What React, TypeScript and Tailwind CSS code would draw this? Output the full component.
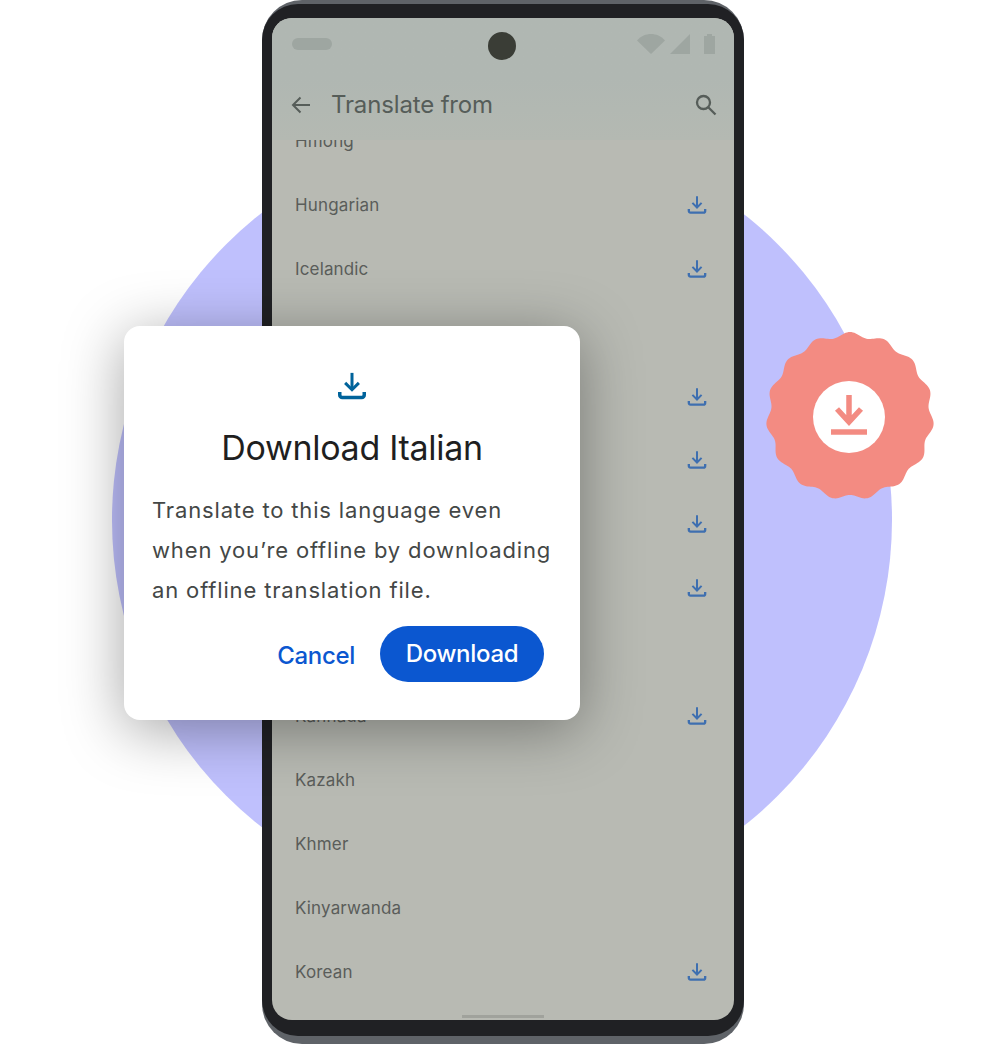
const F = "font-['Inter','Liberation_Sans',sans-serif]";

function Dl({ className }: { className: string }) {
  return (
    <svg viewBox="0 0 24 24" fill="none" stroke="currentColor" strokeWidth="2.4" className={className}>
      <path d="M12 1.5V15" />
      <path d="M6.500 9.500 12 15l5.500-5.500" />
      <path d="M2.200 16.800v2.400a2 2 0 0 0 2 2h15.600a2 2 0 0 0 2-2v-2.400" strokeWidth="2.800" />
    </svg>
  );
}

const rows: [string, boolean][] = [
  ["Hmong", false],
  ["Hungarian", true],
  ["Icelandic", true],
  ["Igbo", false],
  ["Indonesian", true],
  ["Irish", true],
  ["Italian", true],
  ["Japanese", true],
  ["Javanese", false],
  ["Kannada", true],
  ["Kazakh", false],
  ["Khmer", false],
  ["Kinyarwanda", false],
  ["Korean", true],
];

function scallop() {
  const n = 15, cx = 85, cy = 85, pts: string[] = [];
  for (let i = 0; i <= 360; i += 1) {
    const t = (i * Math.PI) / 180;
    const r = 81.500 + 2.500 * Math.cos(n * t + (3 * Math.PI) / 2);
    pts.push(`${(cx + r * Math.cos(t)).toFixed(2)},${(cy + r * Math.sin(t)).toFixed(2)}`);
  }
  return pts.join(" ");
}

export default function App() {
  return (
    <div className={`relative w-[1006px] h-[1044px] bg-white overflow-hidden ${F}`}>
      <div className="absolute left-[112px] top-[130px] w-[780px] h-[780px] rounded-full bg-[#bfc0fd]" />

      <div className="relative ml-[262px] w-[482px] h-[1044px] rounded-[40px] bg-[#5f6368] pt-[4px] pb-[8px]">
        <div className="h-full rounded-[36px] bg-[#202124] px-[10px] pt-[14px] pb-[16px]">
          <div className="relative h-full rounded-[20px] overflow-hidden bg-[#b8bab3] flex flex-col">
            <div className="h-[122px] shrink-0 relative z-10 bg-gradient-to-b from-[#b0b7b2] via-[#b0b7b2] to-[#b4b9b2] flex flex-col">
              <div className="relative h-[56px] pl-[20px] pr-[19px] flex items-start justify-between">
                <div className="mt-[20px] w-[40px] h-[12px] rounded-full bg-[#9ea6a1]" />
                <div className="absolute left-[216px] top-[14px] w-[28px] h-[28px] rounded-full bg-[#3a3d36]" />
                <div className="mt-[16px] flex items-start gap-[5px]">
                  <svg viewBox="0 0 28 20" className="w-[28px] h-[20px]"><path d="M0 6.500C4 2 9 0 14 0s10 2 14 6.500L14 20z" fill="#9ea6a1" /></svg>
                  <svg viewBox="0 0 20 20" className="w-[20px] h-[20px]"><path d="M20 0v20H0z" fill="#9ea6a1" /></svg>
                  <svg viewBox="0 0 11 20" className="ml-[9px] w-[11px] h-[20px]"><path d="M0 2h3V0h5v2h3v18H0z" fill="#9ea6a1" /></svg>
                </div>
              </div>
              <div className="h-[60px] pt-[2px] pl-[17px] pr-[16px] flex items-center text-[#565d59]">
                <svg viewBox="0 0 24 24" fill="none" stroke="currentColor" strokeWidth="2" className="w-[24px] h-[24px]">
                  <path d="M21 12H4M11.500 4.500 4 12l7.500 7.500" />
                </svg>
                <span className="ml-[18px] text-[24px] leading-[30px] flex-1 tracking-[-0.15px]">Translate from</span>
                <svg viewBox="0 0 24 24" fill="none" stroke="currentColor" strokeWidth="2.300" className="w-[24px] h-[24px]">
                  <circle cx="9.500" cy="9.500" r="6.500" />
                  <path d="m14.500 14.500 7 7" />
                </svg>
              </div>
            </div>
            <div className="-mt-[30px] flex flex-col">
              {rows.map(([name, dl]) => (
                <div key={name} className="h-[63.9px] shrink-0 pl-[23px] pr-[27px] flex items-center justify-between">
                  <span className="text-[17px] tracking-[0.15px] text-[#5a5d5a]">{name}</span>
                  {dl && <Dl className="w-[20px] h-[20px] -translate-y-px text-[#3e6fb0]" />}
                </div>
              ))}
            </div>
            <div className="absolute left-[190px] bottom-[2px] w-[82px] h-[3px] bg-[#a0a29c]" />
          </div>
        </div>
      </div>

      <div className="absolute left-[124px] top-[326px] w-[456px] h-[394px] rounded-[16px] bg-white shadow-[0_10px_60px_rgba(0,0,0,0.36)] pt-[45px] px-[28px] flex flex-col">
        <Dl className="w-[30px] h-[30px] self-center text-[#00639b]" />
        <div className="mt-[25px] text-center text-[34px] leading-[44px] text-[#1f1f1f] tracking-[-0.3px]">Download Italian</div>
        <p className="mt-[20px] text-[22px] leading-[40px] text-[#444746] whitespace-nowrap tracking-[0.85px]">
          Translate to this language even
          <br />
          when you’re offline by downloading
          <br />
          an offline translation file.
        </p>
        <div className="mt-[16px] flex items-center justify-end gap-[25px] pr-[8px]">
          <span className="text-[24px] font-medium tracking-[-0.3px] text-[#0b57d0] mt-[4px]">Cancel</span>
          <span className="w-[164px] h-[56px] rounded-full bg-[#0b57d0] text-white text-[24px] font-medium tracking-[-0.3px] flex items-center justify-center">Download</span>
        </div>
      </div>

      <div className="absolute left-[765px] top-[331px] w-[170px] h-[170px]">
        <svg viewBox="0 0 170 170" className="w-full h-full">
          <polygon points={scallop()} fill="#f38b82" />
          <circle cx="84" cy="86" r="36" fill="#fff" />
          <path d="M84 64v28M72 78l12 13 12-13" fill="none" stroke="#f38b82" strokeWidth="5.500" />
          <path d="M66 101h36" stroke="#f38b82" strokeWidth="5.500" />
        </svg>
      </div>
    </div>
  );
}
